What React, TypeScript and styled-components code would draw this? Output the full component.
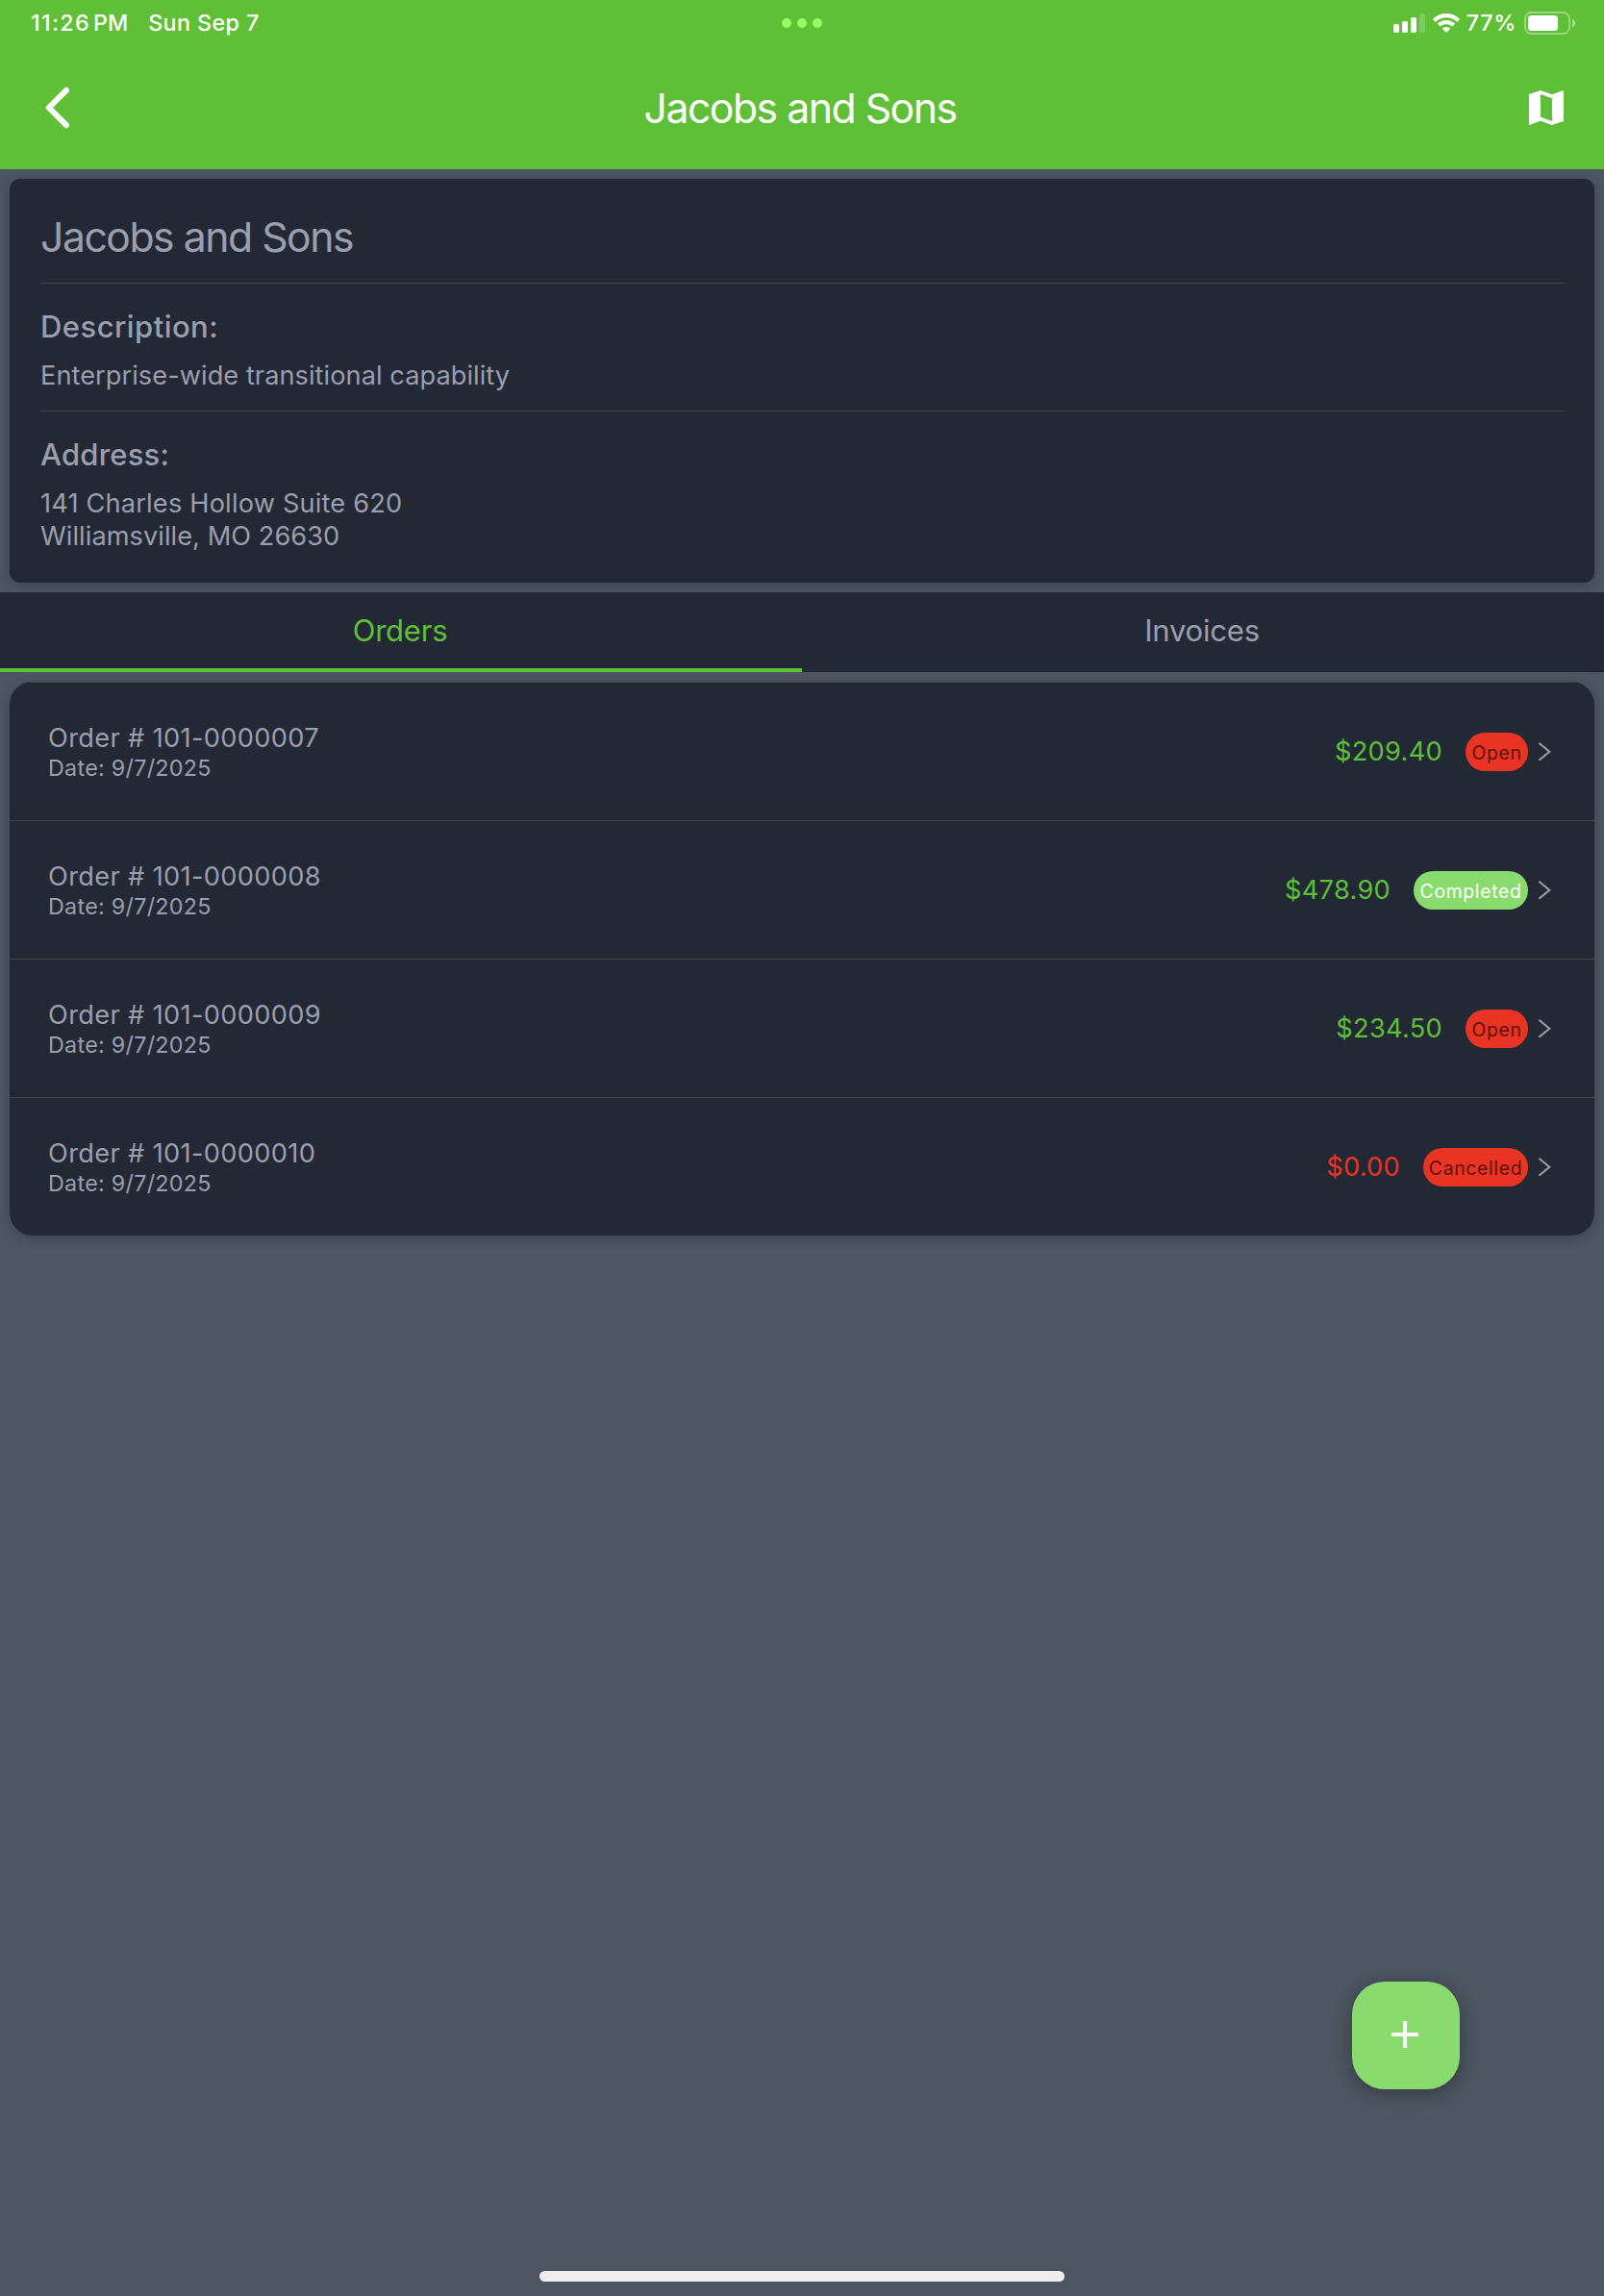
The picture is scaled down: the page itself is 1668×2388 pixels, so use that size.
import React from "react";
import styled, { createGlobalStyle } from "styled-components";

const green = "#5fbf37";
const lightGreen = "#8adb6d";
const red = "#e93424";
const surface = "#222935";
const backdrop = "#4d5561";
const muted = "#9b9eae";
const line = "#40473f";

const Global = createGlobalStyle`
  * { box-sizing: border-box; }
  body { margin: 0; background: ${backdrop}; font-family: Inter, "Liberation Sans", sans-serif; }
`;

const Screen = styled.div`
  position: relative;
  width: 1668px;
  height: 2388px;
  display: flex;
  flex-direction: column;
  background: ${backdrop};
  color: ${muted};
  overflow: hidden;
`;

const Header = styled.header`
  height: 176px;
  flex: none;
  background: ${green};
  color: #fff;
`;

const StatusBar = styled.div`
  height: 48px;
  display: grid;
  grid-template-columns: 1fr auto 1fr;
  align-items: center;
  padding: 0 29px;
  font-size: 23.3px;
  font-weight: 500;
  line-height: 28px;
`;

const StatusLeft = styled.div`
  display: flex;
  padding: 0 0 1px 3px;
`;

const Clock = styled.span`
  letter-spacing: 1.3px;
  margin-right: 3px;
`;

const StatusDate = styled.span`
  margin-left: 21px;
  letter-spacing: 0.4px;
`;

const StatusRight = styled.div`
  display: flex;
  justify-content: flex-end;
  align-items: center;
`;

const WifiIcon = styled.svg`
  margin-left: 8px;
`;

const Percent = styled.span`
  margin: 0 8px 0 7px;
  padding-bottom: 1px;
  letter-spacing: 0.7px;
`;

const Dots = styled.div`
  display: flex;
  gap: 6px;
`;

const Dot = styled.span`
  width: 10px;
  height: 10px;
  border-radius: 50%;
  background: #92ff62;
`;

const NavBar = styled.div`
  height: 128px;
  display: grid;
  grid-template-columns: 48px 1fr 48px;
  align-items: center;
  padding: 0 36px;
`;

const NavTitle = styled.h1`
  margin: 0;
  padding: 2px 4px 0 0;
  text-align: center;
  font-size: 42.7px;
  font-weight: 400;
  line-height: 52px;
  letter-spacing: -1.47px;
`;

const InfoCard = styled.section`
  margin: 10px 10px 0;
  height: 420px;
  flex: none;
  padding: 0 32px;
  border-radius: 11px;
  background: ${surface};
  box-shadow: 0 3px 12px rgba(0, 0, 0, 0.2);
`;

const CardTitle = styled.h2`
  margin: 0;
  height: 109px;
  padding-top: 35px;
  border-bottom: 1px solid ${line};
  font-size: 42.7px;
  font-weight: 400;
  line-height: 52px;
  letter-spacing: -1.47px;
`;

const Section = styled.div<{ $divided?: boolean }>`
  height: ${(p) => (p.$divided ? "133px" : "auto")};
  padding-top: 25px;
  border-bottom: ${(p) => (p.$divided ? `1px solid ${line}` : "none")};
`;

const SectionLabel = styled.h3<{ $tracking: number }>`
  margin: 0 0 14px;
  font-size: 31px;
  font-weight: 500;
  line-height: 40px;
  letter-spacing: ${(p) => p.$tracking}px;
`;

const SectionText = styled.p<{ $tracking?: number }>`
  margin: 0;
  font-size: 27.2px;
  line-height: 34px;
  letter-spacing: ${(p) => p.$tracking ?? 0.05}px;
`;

const Tabs = styled.nav`
  margin-top: 10px;
  height: 83px;
  flex: none;
  display: flex;
  background: ${surface};
`;

const Tab = styled.div<{ $active?: boolean }>`
  flex: 1;
  padding-right: 2px;
  text-align: center;
  font-size: 31px;
  line-height: 79px;
  letter-spacing: -0.2px;
  color: ${(p) => (p.$active ? green : muted)};
  border-bottom: 4px solid ${(p) => (p.$active ? green : "transparent")};
`;

const OrderList = styled.ul`
  list-style: none;
  margin: 10px 10px 0;
  padding: 0;
  border-radius: 24px;
  background: ${surface};
  overflow: hidden;
  box-shadow: 0 3px 12px rgba(0, 0, 0, 0.2);
  flex: none;
`;

const OrderRow = styled.li`
  height: 144px;
  display: flex;
  align-items: center;
  justify-content: space-between;
  padding: 0 45px 0 40px;
  border-top: 1px solid ${line};
`;

const OrderNumber = styled.div`
  font-size: 27.2px;
  line-height: 34px;
  letter-spacing: 0.35px;
`;

const OrderDate = styled.div`
  font-size: 23.3px;
  line-height: 28px;
  letter-spacing: 0.28px;
`;

const RowEnd = styled.div`
  display: flex;
  align-items: center;
`;

const Price = styled.span<{ $void?: boolean }>`
  margin-right: 24px;
  font-size: 27.2px;
  line-height: 34px;
  letter-spacing: 0.3px;
  color: ${(p) => (p.$void ? red : green)};
`;

const Badge = styled.span<{ $done?: boolean; $width: number }>`
  width: ${(p) => p.$width}px;
  height: 40px;
  padding-top: 1px;
  margin-right: 10px;
  border-radius: 20px;
  text-align: center;
  font-size: 19.4px;
  line-height: 41px;
  letter-spacing: 0.65px;
  background: ${(p) => (p.$done ? lightGreen : red)};
  color: ${(p) => (p.$done ? "#fff" : "#5f120b")};
`;

const Fab = styled.button`
  position: absolute;
  left: 1406px;
  top: 2061px;
  width: 112px;
  height: 112px;
  padding: 0;
  border: 0;
  border-radius: 34px;
  background: ${lightGreen};
  box-shadow: 0 4px 18px rgba(0, 0, 0, 0.32);
`;

const HomeIndicator = styled.div`
  position: absolute;
  left: 561px;
  top: 2362px;
  width: 546px;
  height: 11px;
  border-radius: 6px;
  background: #eee;
`;

const orders = [
  { number: "101-0000007", price: "$209.40", status: "Open", width: 65 },
  { number: "101-0000008", price: "$478.90", status: "Completed", width: 119, done: true },
  { number: "101-0000009", price: "$234.50", status: "Open", width: 65 },
  { number: "101-0000010", price: "$0.00", status: "Cancelled", width: 109, void: true },
];

export default function App() {
  return (
    <Screen>
      <Global />
      <Header>
        <StatusBar>
          <StatusLeft>
            <Clock>11:26</Clock>
            <span>PM</span>
            <StatusDate>Sun Sep 7</StatusDate>
          </StatusLeft>
          <Dots>
            <Dot />
            <Dot />
            <Dot />
          </Dots>
          <StatusRight>
            <svg width="33" height="20" fill="#fff">
              <rect x="0" y="11" width="6" height="9" rx="1.8" />
              <rect x="9" y="8" width="6" height="12" rx="1.8" />
              <rect x="18" y="4" width="6" height="16" rx="1.8" />
              <rect x="27" y="0" width="6" height="20" rx="1.8" opacity="0.2" />
            </svg>
            <WifiIcon width="28" height="20" viewBox="0 0 28 20" fill="none" stroke="#fff">
              <path d="M1.4 7.4A17.8 17.8 0 0 1 26.6 7.4" strokeWidth="4.2" />
              <path d="M6.2 12.2A11 11 0 0 1 21.8 12.2" strokeWidth="4" />
              <path d="M14 20L9.8 15.8A6 6 0 0 1 18.2 15.8Z" fill="#fff" stroke="none" />
            </WifiIcon>
            <Percent>77%</Percent>
            <svg width="54" height="24" fill="#fff">
              <rect x="1" y="1" width="46" height="22" rx="6.5" fill="none" stroke="#fff" strokeWidth="2" opacity="0.38" />
              <rect x="4" y="4" width="31" height="16" rx="3.6" />
              <path d="M50 7.5Q53 9 53 12T50 16.5Z" opacity="0.45" />
            </svg>
          </StatusRight>
        </StatusBar>
        <NavBar>
          <svg width="48" height="48" fill="none" stroke="#fff" strokeWidth="6" strokeLinecap="round" strokeLinejoin="round">
            <path d="M33 5.8L14.8 24L33 42.2" />
          </svg>
          <NavTitle>Jacobs and Sons</NavTitle>
          <svg width="48" height="48" viewBox="0 0 24 24" fill="#fff">
            <path fillRule="evenodd" d="M3 5L9 3L15 5.1L20.8 3H21V19L15 21L9 18.9L3.2 21H3ZM9 5V16.9L15 19V7.1Z" />
          </svg>
        </NavBar>
      </Header>
      <InfoCard>
        <CardTitle>Jacobs and Sons</CardTitle>
        <Section $divided>
          <SectionLabel $tracking={0.45}>Description:</SectionLabel>
          <SectionText>Enterprise-wide transitional capability</SectionText>
        </Section>
        <Section>
          <SectionLabel $tracking={0.2}>Address:</SectionLabel>
          <SectionText $tracking={0.18}>141 Charles Hollow Suite 620</SectionText>
          <SectionText>Williamsville, MO 26630</SectionText>
        </Section>
      </InfoCard>
      <Tabs>
        <Tab $active>Orders</Tab>
        <Tab>Invoices</Tab>
      </Tabs>
      <OrderList>
        {orders.map((o) => (
          <OrderRow key={o.number}>
            <div>
              <OrderNumber>Order # {o.number}</OrderNumber>
              <OrderDate>Date: 9/7/2025</OrderDate>
            </div>
            <RowEnd>
              <Price $void={o.void}>{o.price}</Price>
              <Badge $done={o.done} $width={o.width}>
                {o.status}
              </Badge>
              <svg width="14" height="20" fill="none" stroke={muted} strokeWidth="2" strokeLinecap="round">
                <path d="M2 1.2L12.3 9.7L2 18.2" />
              </svg>
            </RowEnd>
          </OrderRow>
        ))}
      </OrderList>
      <Fab aria-label="Add order">
        <svg width="112" height="112" stroke="#fff" strokeWidth="4">
          <path d="M41 55H69M55 41V69" />
        </svg>
      </Fab>
      <HomeIndicator />
    </Screen>
  );
}
